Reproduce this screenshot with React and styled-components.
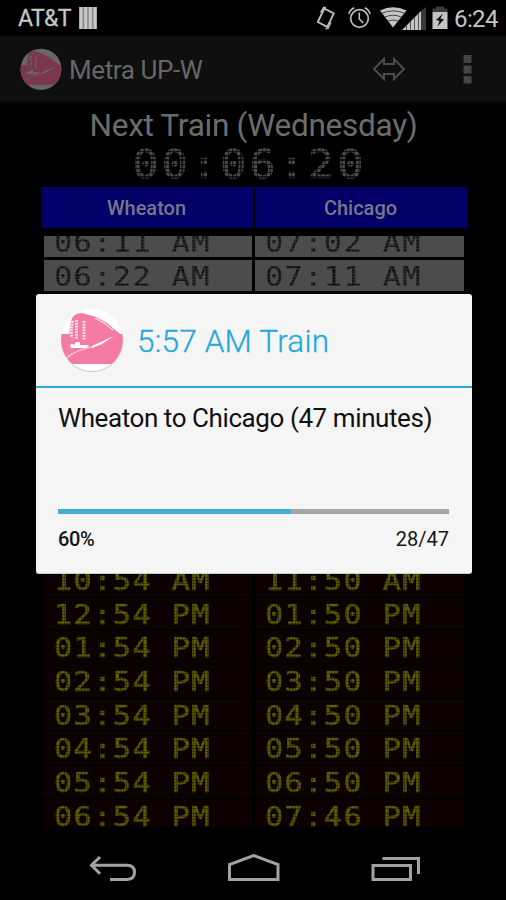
import React from 'react';
import styled, { createGlobalStyle, css } from 'styled-components';

const GlobalStyle = createGlobalStyle`
  html, body { margin: 0; background: #000; }
  * { box-sizing: border-box; }
`;

const Screen = styled.div`
  position: relative;
  width: 506px;
  height: 900px;
  overflow: hidden;
  display: flex;
  flex-direction: column;
  background: #000;
  font-family: Roboto, sans-serif;
`;

const StatusBar = styled.header`
  height: 36px;
  flex: none;
  display: flex;
  align-items: center;
  justify-content: space-between;
  padding: 0 7px 0 18px;
  color: #c6c6c6;
`;

const StatusGroup = styled.div`
  display: flex;
  align-items: center;
  height: 36px;
`;

const Carrier = styled.span`
  font-size: 23px;
  line-height: 34px;
  padding-top: 2px;
  letter-spacing: -0.6px;
  width: 61px;
  -webkit-text-stroke: 0.3px #c6c6c6;
`;

const StatusTime = styled.span`
  font-size: 24px;
  line-height: 36px;
  letter-spacing: -0.6px;
  width: 45px;
  padding-top: 1px;
  white-space: nowrap;
`;

const Icon = styled.svg`
  display: block;
  flex: none;
`;

const ActionBar = styled.nav`
  height: 67px;
  flex: none;
  display: flex;
  align-items: center;
  padding: 0 34px 0 20px;
  background: #0f0f0f;
  border-bottom: 2px solid #080808;
`;

const AppTitle = styled.h1`
  margin: 2px auto 0 7px;
  font-size: 26px;
  font-weight: 400;
  line-height: 36px;
  color: #666;
  letter-spacing: -0.4px;
`;

const Actions = styled.div`
  display: flex;
  align-items: center;
  gap: 57px;
`;

const Board = styled.main`
  height: 732px;
  flex: none;
  display: flex;
  flex-direction: column;
  align-items: center;
  padding: 4px 0 0 1px;
`;

const NextTrain = styled.h2`
  margin: 0;
  font-size: 31.5px;
  font-weight: 400;
  line-height: 38px;
  letter-spacing: -0.27px;
  white-space: nowrap;
  color: #6c6c6c;
`;

const dotMatrix = css`
  font-family: 'DejaVu Sans Mono', monospace;
  white-space: pre;
  mask-composite: intersect;
  transform: scaleX(1.12);
`;

const Countdown = styled.div`
  ${dotMatrix}
  mask-image: repeating-linear-gradient(90deg, #000 0 2.7px, rgba(0, 0, 0, 0.3) 2.7px 3.75px),
    repeating-linear-gradient(180deg, #000 0 2.9px, rgba(0, 0, 0, 0.3) 2.9px 4.2px);
  height: 42px;
  margin-top: -1px;
  margin-right: 7px;
  font-size: 38.5px;
  line-height: 42px;
  letter-spacing: 2.96px;
  color: #4c4c4c;
  -webkit-text-stroke: 0.7px #4c4c4c;
`;

const ColumnHeads = styled.div`
  width: 426px;
  height: 41px;
  margin-top: 1px;
  margin-bottom: 8px;
  display: grid;
  grid-template-columns: 1fr 1fr;
  gap: 2px;
  flex: none;
`;

const ColumnHead = styled.div`
  display: flex;
  align-items: center;
  justify-content: center;
  background: #000068;
  color: #77778a;
  font-size: 20px;
  font-weight: 500;
  padding-top: 1px;
`;

const Timetable = styled.div`
  width: 420px;
  height: 591px;
  flex: none;
  overflow: hidden;
`;

const Rows = styled.div`
  display: flex;
  flex-direction: column;
  gap: 2.2px;
  margin-top: ${(p) => p.$offset}px;
`;

const Row = styled.div`
  display: grid;
  grid-template-columns: 1fr 1fr;
  gap: 2.5px;
  height: 31.5px;
  flex: none;
`;

const Time = styled.div`
  padding-left: 10px;
  background: ${(p) => (p.$late ? '#0c0000' : '#4c4c4c')};
  color: ${(p) => (p.$late ? '#5e5e00' : '#141414')};
  -webkit-text-stroke: ${(p) => (p.$late ? '0.6px #5e5e00' : '0.2px #141414')};
`;

const TimeText = styled.span`
  ${dotMatrix}
  display: block;
  width: 160px;
  transform-origin: left center;
  mask-image: repeating-linear-gradient(90deg, #000 0 1.8px, rgba(0, 0, 0, 0.65) 1.8px 2.5px),
    repeating-linear-gradient(180deg, #000 0 2px, rgba(0, 0, 0, 0.65) 2px 2.85px);
  font-size: 27px;
  line-height: 34px;
  height: 31.5px;
  letter-spacing: 1.25px;
`;

const NavBar = styled.footer`
  height: 65px;
  flex: none;
`;

const Dialog = styled.section`
  position: absolute;
  left: 36px;
  top: 294px;
  width: 436px;
  height: 280px;
  display: flex;
  flex-direction: column;
  border-radius: 3px;
  background: #f5f5f5;
  border-bottom: 1px solid #ccc;
`;

const DialogHeader = styled.div`
  height: 94px;
  flex: none;
  display: flex;
  align-items: center;
  gap: 13px;
  padding-left: 24px;
  border-bottom: 2.5px solid #2fa8d3;
`;

const DialogTitle = styled.h3`
  margin: 3px 0 0;
  font-size: 31.5px;
  font-weight: 300;
  letter-spacing: 0.2px;
  color: #23a9dc;
  white-space: nowrap;
  -webkit-text-stroke: 0.3px #23a9dc;
`;

const DialogBody = styled.div`
  padding: 12px 23px 0 22px;
`;

const Message = styled.p`
  margin: 0;
  height: 109px;
  font-size: 26px;
  line-height: 36px;
  letter-spacing: -0.42px;
  color: #111;
  white-space: nowrap;
`;

const Track = styled.div`
  height: 5px;
  background: #a5a5a5;
`;

const Fill = styled.div`
  height: 5px;
  background: #42aed3;
`;

const Figures = styled.div`
  display: flex;
  justify-content: space-between;
  margin-top: 12px;
  font-size: 20px;
  line-height: 26px;
  color: #151515;
`;

const Percent = styled.span`
  font-weight: 500;
  letter-spacing: -0.4px;
`;

const Count = styled.span``;

function TrainLogo({ size, dim }) {
  const pink = dim ? '#7b3650' : '#f57ba3';
  const light = dim ? '#686868' : '#fff';
  const id = dim ? 'logo-dim' : 'logo-clear';
  return (
    <Icon width={size} height={size} viewBox="0 0 64 64">
      <clipPath id={id}><circle cx="32" cy="32" r="31" /></clipPath>
      <circle cx="32" cy="33" r="31" fill={dim ? '#555' : '#c8c8c8'} />
      <g clipPath={`url(#${id})`}>
        <rect width="64" height="64" fill={light} />
        <path d="M0 26H9L11 13Q13 5 22 5L36 9L47 15L60 26H64V56H0Z" fill={pink} />
        <path d="M13 13Q10 22 12 30M16.500 12v19M24 13v19" stroke={light} strokeWidth="3" strokeDasharray="1.8 1" fill="none" opacity=".8" />
        <path d="M10 38Q11 34 14 37L16 34H20V37H29L27 40H11ZM32 38L54 28L42 36L32 40Z" fill={light} />
        <path d="M6 50Q18 41 32 39M35 10l9 5 9 7" stroke={light} strokeWidth="1.2" fill="none" opacity=".7" />
      </g>
    </Icon>
  );
}

const BarsIcon = () => (
  <Icon width="18" height="22" viewBox="0 0 18 22">
    <rect width="18" height="22" fill="#8a8a8a" />
    <path d="M2 0v22M6.7 0v22M11.3 0v22M16 0v22" stroke="#c8c8c8" strokeWidth="3" />
  </Icon>
);

const StatusIcons = () => (
  <Icon width="140" height="36" viewBox="313 0 140 36" fill="none" stroke="#bdbdbd">
    <g strokeWidth="1.9">
      <path d="M323.3 8.500L332.800 13.300L326.300 26.800L316.800 22Z" strokeLinejoin="round" />
      <path d="M319.500 12.500l3-5h2.500M330 22.500l-3 6h-2.500" strokeWidth="1.3" />
    </g>
    <circle cx="358.500" cy="18.500" r="8.800" strokeWidth="1.7" />
    <path d="M358.300 12.500v6.500l4 4M347.800 14q1.500-4.500 5.500-6.200M369.200 14q-1.500-4.500-5.500-6.200" strokeWidth="1.6" />
    <path d="M379 10.500Q392 4 405.500 10.500L392 27.500Z" fill="#c4c4c4" stroke="none" />
    <path d="M381 13.200Q392 8.500 403.500 13.200M384 17Q392 13.500 400.500 17M387 21Q392 19 397 21" stroke="#444" strokeWidth="1" />
    <path d="M401 30L420 11V30Z" fill="#c4c4c4" stroke="none" />
    <path d="M420 11L425 7V30H420Z" fill="#3a3a3a" stroke="none" />
    <path d="M405.500 25v5M409.500 21v9M413.500 17v13M417.500 13v17" stroke="#555" strokeWidth="1" />
    <path d="M431.500 12V8.500H435V6.500H443V8.500H446.500V12Z" fill="#3c3c3c" stroke="none" />
    <path d="M431.500 12H446.500V29H431.500Z" fill="#c4c4c4" stroke="none" />
    <path d="M442 13.500L435 20L438.500 21L436.500 26.500L443 19.500L439.500 18.500Z" fill="#111" stroke="none" />
  </Icon>
);

const SwapIcon = () => (
  <Icon width="34" height="24" viewBox="0 0 34 24" fill="none" stroke="#4b4b4b" strokeWidth="2">
    <path d="M2 12L12 2V7H22V2L32 12L22 22V17H12V22Z" />
  </Icon>
);

const MenuIcon = () => (
  <Icon width="9" height="30" viewBox="0 0 9 30" fill="#454545">
    <path d="M.5 1H8.500V9H.5ZM.5 11.500H8.500V19.500H.5ZM.5 22H8.500V29.500H.5Z" />
  </Icon>
);

const NavIcons = () => (
  <Icon width="506" height="65" viewBox="0 835 506 65" fill="none" stroke="#a2a2a2" strokeWidth="3">
    <path d="M100 857L91.500 865.300L100 873.700M92 865.300H127Q134.500 865.300 134.500 872.300T127 879.500H110" />
    <path d="M229.500 879.500V864.500L253.500 855.500L278 864.500V879.500Z" />
    <path d="M373 865.500H410.500V879.500H373ZM382.500 858.500H418.500V874" />
  </Icon>
);

const morning = [['06:11 AM', '07:02 AM'], ['06:22 AM', '07:11 AM']];
const later = [
  ['10:54 AM', '11:50 AM'],
  ['12:54 PM', '01:50 PM'],
  ['01:54 PM', '02:50 PM'],
  ['02:54 PM', '03:50 PM'],
  ['03:54 PM', '04:50 PM'],
  ['04:54 PM', '05:50 PM'],
  ['05:54 PM', '06:50 PM'],
  ['06:54 PM', '07:46 PM'],
];

function TimeRows({ rows, late, offset }) {
  return (
    <Rows $offset={offset}>
      {rows.map(([from, to]) => (
        <Row key={from}>
          <Time $late={late}><TimeText>{from}</TimeText></Time>
          <Time $late={late}><TimeText>{to}</TimeText></Time>
        </Row>
      ))}
    </Rows>
  );
}

export default function App() {
  return (
    <Screen>
      <GlobalStyle />
      <StatusBar>
        <StatusGroup><Carrier>AT&amp;T</Carrier><BarsIcon /></StatusGroup>
        <StatusGroup><StatusIcons /><StatusTime>6:24</StatusTime></StatusGroup>
      </StatusBar>
      <ActionBar>
        <TrainLogo size={42} dim />
        <AppTitle>Metra UP-W</AppTitle>
        <Actions><SwapIcon /><MenuIcon /></Actions>
      </ActionBar>
      <Board>
        <NextTrain>Next Train (Wednesday)</NextTrain>
        <Countdown>00:06:20</Countdown>
        <ColumnHeads>
          <ColumnHead>Wheaton</ColumnHead>
          <ColumnHead>Chicago</ColumnHead>
        </ColumnHeads>
        <Timetable>
          <TimeRows rows={morning} offset={-10.2} />
          <TimeRows rows={later} late offset={273} />
        </Timetable>
      </Board>
      <NavBar><NavIcons /></NavBar>
      <Dialog>
        <DialogHeader>
          <TrainLogo size={64} />
          <DialogTitle>5:57 AM Train</DialogTitle>
        </DialogHeader>
        <DialogBody>
          <Message>Wheaton to Chicago (47 minutes)</Message>
          <Track><Fill style={{ width: `${(28 / 47) * 100}%` }} /></Track>
          <Figures><Percent>60%</Percent><Count>28/47</Count></Figures>
        </DialogBody>
      </Dialog>
    </Screen>
  );
}
